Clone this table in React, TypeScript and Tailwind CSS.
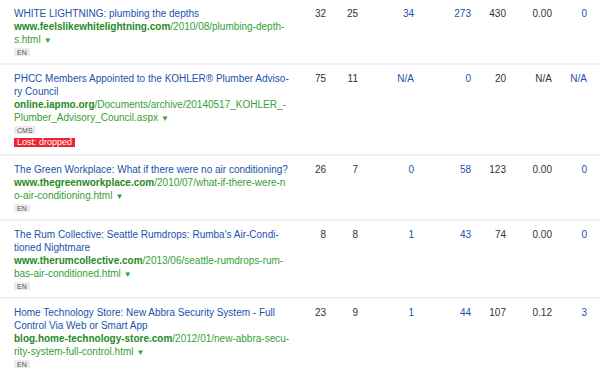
type Row = {
  title: string[];
  domain: string;
  path: string[];
  badges: string[];
  lost?: string;
  nums: [string, string, string, string, string, string, string];
};

const rows: Row[] = [
  {
    title: ['WHITE LIGHTNING: plumbing the depths'],
    domain: 'www.feelslikewhitelightning.com',
    path: ['/2010/08/plumbing-depth-', 's.html'],
    badges: ['EN'],
    nums: ['32', '25', '34', '273', '430', '0.00', '0'],
  },
  {
    title: ['PHCC Members Appointed to the KOHLER® Plumber Adviso-', 'ry Council'],
    domain: 'online.iapmo.org',
    path: ['/Documents/archive/20140517_KOHLER_-', 'Plumber_Advisory_Council.aspx'],
    badges: ['CMS'],
    lost: 'Lost: dropped',
    nums: ['75', '11', 'N/A', '0', '20', 'N/A', 'N/A'],
  },
  {
    title: ['The Green Workplace: What if there were no air conditioning?'],
    domain: 'www.thegreenworkplace.com',
    path: ['/2010/07/what-if-there-were-n', 'o-air-conditioning.html'],
    badges: ['EN'],
    nums: ['26', '7', '0', '58', '123', '0.00', '0'],
  },
  {
    title: ["The Rum Collective: Seattle Rumdrops: Rumba's Air-Condi-", 'tioned Nightmare'],
    domain: 'www.therumcollective.com',
    path: ['/2013/06/seattle-rumdrops-rum-', 'bas-air-conditioned.html'],
    badges: ['EN'],
    nums: ['8', '8', '1', '43', '74', '0.00', '0'],
  },
  {
    title: ['Home Technology Store: New Abbra Security System - Full', 'Control Via Web or Smart App'],
    domain: 'blog.home-technology-store.com',
    path: ['/2012/01/new-abbra-secu-', 'rity-system-full-control.html'],
    badges: ['EN'],
    nums: ['23', '9', '1', '44', '107', '0.12', '3'],
  },
];

// widths of the number columns and whether the value is a link
const cols = [
  { w: 'w-[26px]', blue: false },
  { w: 'w-[32px]', blue: false },
  { w: 'w-[56px]', blue: true },
  { w: 'w-[57px]', blue: true },
  { w: 'w-[35px]', blue: false },
  { w: 'w-[46px]', blue: false },
  { w: 'w-[35px]', blue: true },
];

function BacklinkRow({ row, first }: { row: Row; first: boolean }) {
  return (
    <div className={`flex pt-[7px] pb-[7px] ${first ? '' : 'border-t-2 border-[#f1f1f1]'}`}>
      <div className="w-[300px] pl-[14px] pr-[8px]">
        {row.title.map((t) => (
          <div key={t} className="h-[13px] whitespace-nowrap text-[#2152ad]">
            {t}
          </div>
        ))}
        {row.path.map((p, i) => (
          <div key={p} className="h-[13px] whitespace-nowrap text-[#36a036]">
            {i === 0 && <span className="font-bold text-[#1f8a1f]">{row.domain}</span>}
            {p}
            {i === row.path.length - 1 && <span className="ml-[3px] text-[8px]">▼</span>}
          </div>
        ))}
        {row.badges.map((b) => (
          <div key={b} className="mt-[2px] flex">
            <span className="flex h-[8px] items-center rounded-[1px] bg-[#ececec] px-[3px] text-[7px] leading-none text-[#555]">
              {b}
            </span>
          </div>
        ))}
        {row.lost && (
          <div className="mt-[4px] flex">
            <span className="flex h-[9px] items-center bg-[#ec2330] px-[3px] text-[9px] leading-none text-white">
              {row.lost}
            </span>
          </div>
        )}
      </div>
      {row.nums.map((n, i) => (
        <div
          key={i}
          className={`${cols[i].w} h-[13px] text-right ${cols[i].blue ? 'text-[#2152ad]' : 'text-[#333]'}`}
        >
          {n}
        </div>
      ))}
    </div>
  );
}

export default function App() {
  return (
    <div
      className="h-[375px] w-[600px] overflow-hidden bg-white text-[10px] leading-[13px]"
      style={{ fontFamily: '"Liberation Sans", Arial, sans-serif' }}
    >
      {rows.map((r, i) => (
        <BacklinkRow key={r.domain} row={r} first={i === 0} />
      ))}
    </div>
  );
}
